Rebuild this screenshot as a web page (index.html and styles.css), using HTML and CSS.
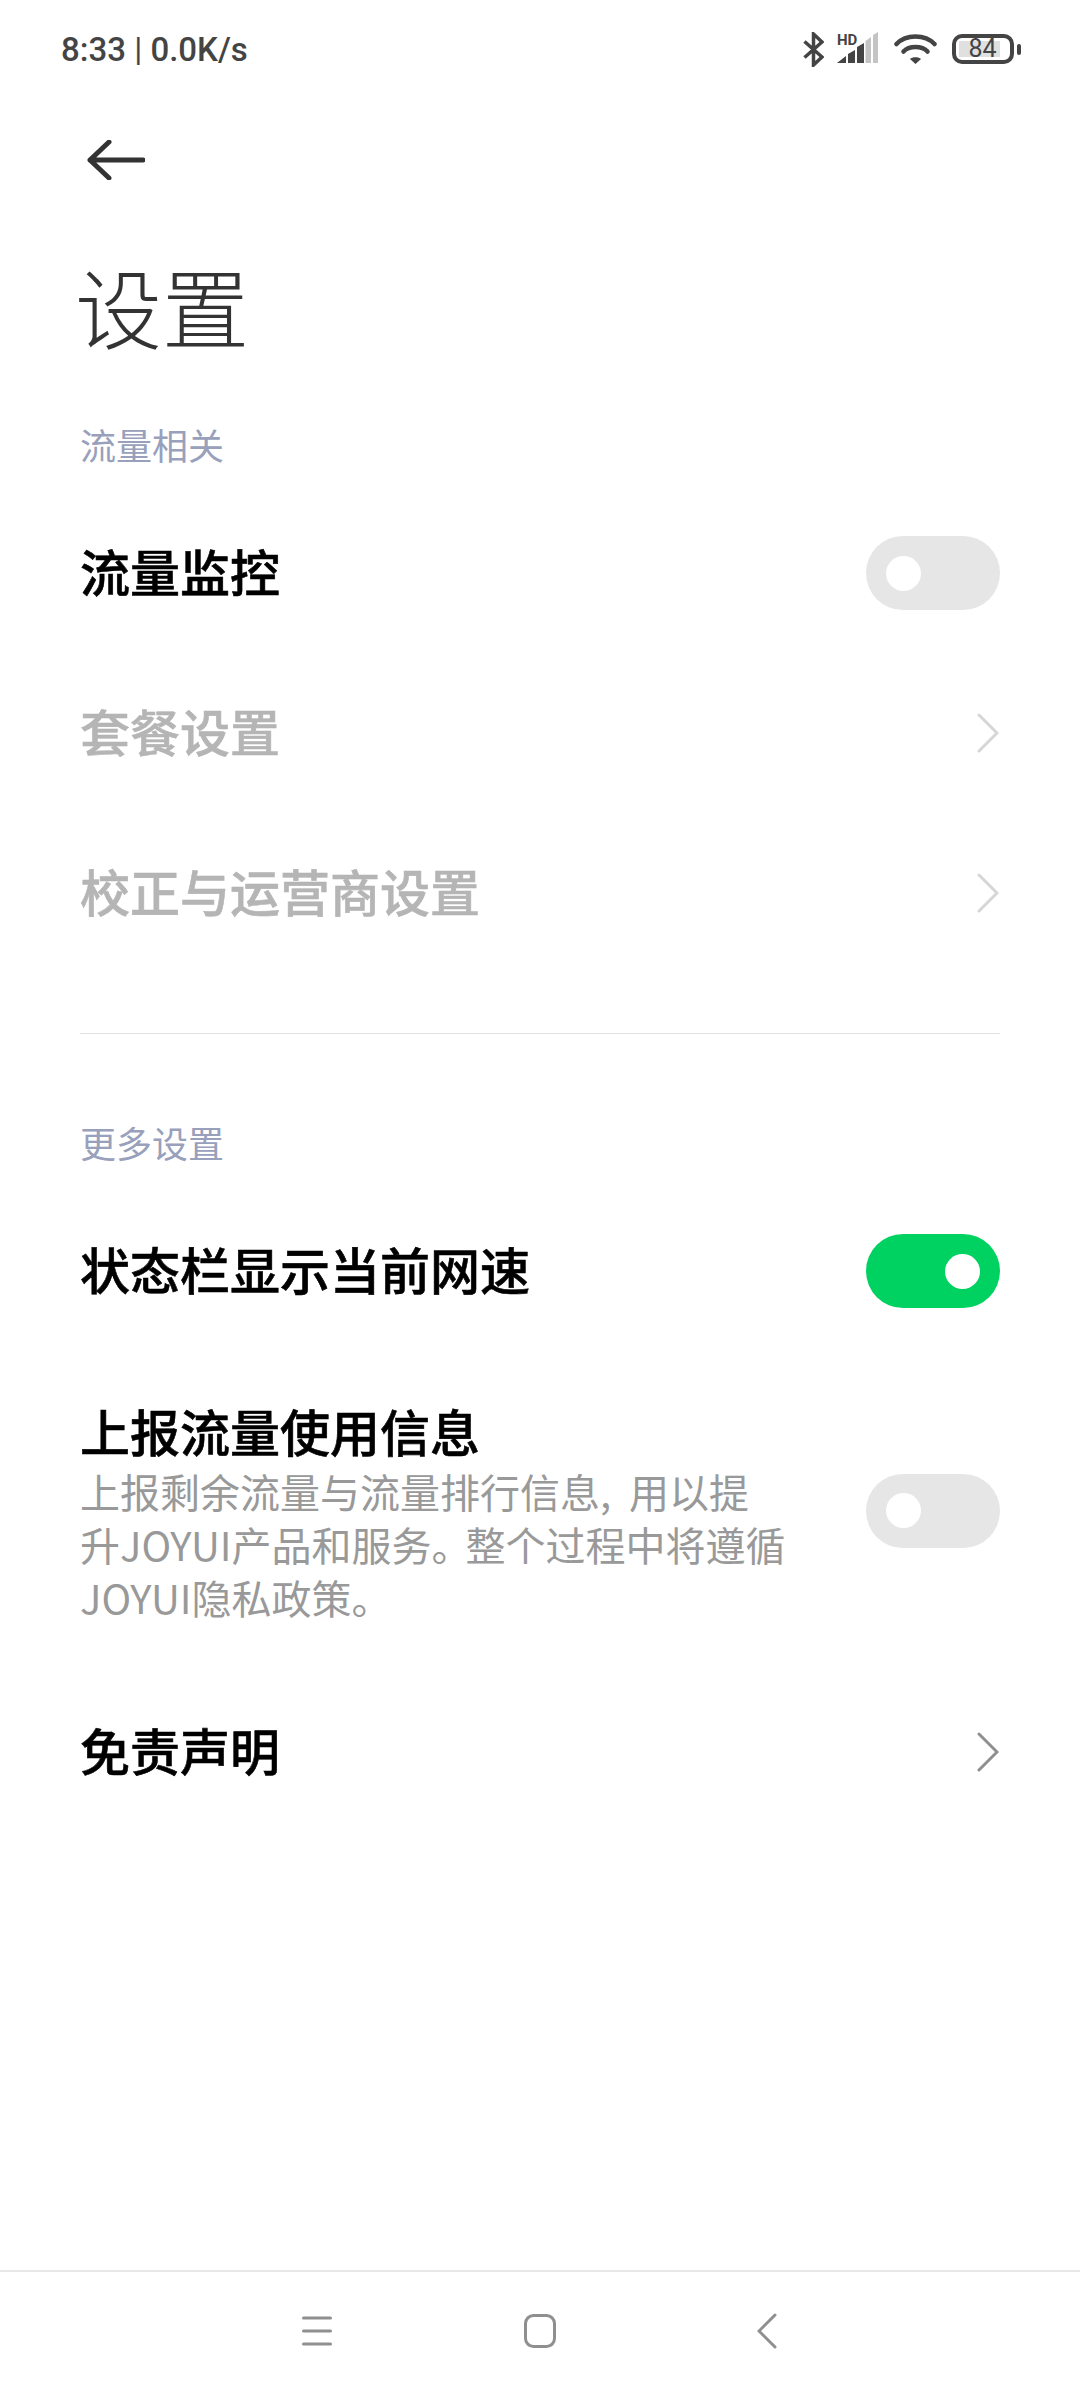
FILE: index.html
```html
<!DOCTYPE html>
<html lang="zh-CN">
<head>
  <meta charset="UTF-8">
  <meta name="viewport" content="width=device-width, initial-scale=1.0">
  <title>设置</title>
  <link rel="stylesheet" href="styles.css">
</head>
<body>
  <div class="page">
    <div class="status-bar">
      <div class="status-text">8:33 <span class="status-sep">|</span> 0.0K/s</div>
      <div class="status-icons">
        <svg class="ic-bt" width="21" height="35" viewBox="0 0 21 35"><path d="M1.500 9.500 L19 25 L10.500 33 V2 L19 10 L1.500 25.500" fill="none" stroke="#444" stroke-width="3.500"/></svg>
        <svg class="ic-signal" width="41" height="38" viewBox="0 0 41 38">
          <text x="0" y="14.700" class="hd-text">HD</text>
          <path d="M0 33 L9 26 V33Z" fill="#444"/>
          <path d="M11 24 L18 20 V33 H11Z" fill="#444"/>
          <path d="M20 17 L27 13 V33 H20Z" fill="#444"/>
          <path d="M28.500 11 L34 7 V33 H28.500Z" fill="#c4c4c4"/>
          <path d="M36 5 L41 2 V33 H36Z" fill="#c4c4c4"/>
        </svg>
        <svg class="ic-wifi" width="43" height="30" viewBox="0 0 43 30">
          <path d="M2.500 10 C12 0 31 0 40.500 10" fill="none" stroke="#444" stroke-width="4.500" stroke-linecap="round"/>
          <path d="M9.500 17.500 C15 11.500 28 11.500 33.500 17.500" fill="none" stroke="#444" stroke-width="4.500" stroke-linecap="round"/>
          <path d="M21.500 30 L16 25 C18 22.500 25 22.500 27 25Z" fill="#444"/>
        </svg>
        <div class="battery">
          <div class="battery-body"><span class="battery-level">84</span></div>
          <div class="battery-nub"></div>
        </div>
      </div>
    </div>

    <div class="header">
      <svg class="back-arrow" width="58" height="40" viewBox="0 0 58 40"><path d="M56 20 H3 M22 2 L3 20 L22 38" fill="none" stroke="#333" stroke-width="5" stroke-linecap="round" stroke-linejoin="round"/></svg>
      <h1 class="page-title">设置</h1>
    </div>

    <div class="group-label">流量相关</div>
    <div class="row">
      <div class="row-title">流量监控</div>
      <div class="switch"><div class="knob"></div></div>
    </div>
    <div class="row row-disabled">
      <div class="row-title">套餐设置</div>
      <svg class="chevron" width="22" height="40" viewBox="0 0 22 40"><path d="M2 2 L20 20 L2 38" fill="none" stroke="#d6d6d6" stroke-width="3" stroke-linecap="round"/></svg>
    </div>
    <div class="row row-disabled">
      <div class="row-title">校正与运营商设置</div>
      <svg class="chevron" width="22" height="40" viewBox="0 0 22 40"><path d="M2 2 L20 20 L2 38" fill="none" stroke="#d6d6d6" stroke-width="3" stroke-linecap="round"/></svg>
    </div>

    <div class="divider"></div>

    <div class="group-label">更多设置</div>
    <div class="row">
      <div class="row-title">状态栏显示当前网速</div>
      <div class="switch switch-on"><div class="knob"></div></div>
    </div>
    <div class="row row-tall">
      <div class="row-main">
        <div class="row-title">上报流量使用信息</div>
        <div class="row-desc">上报剩余流量与流量排行信息,&nbsp; 用以提<br>升JOYUI产品和服务<span class="tight-stop">。</span>整个过程中将遵循<br>JOYUI隐私政策。</div>
      </div>
      <div class="switch"><div class="knob"></div></div>
    </div>
    <div class="row">
      <div class="row-title">免责声明</div>
      <svg class="chevron" width="22" height="40" viewBox="0 0 22 40"><path d="M2 2 L20 20 L2 38" fill="none" stroke="#8f8f8f" stroke-width="3" stroke-linecap="round"/></svg>
    </div>

    <div class="nav-bar">
      <svg width="30" height="30" viewBox="0 0 30 30"><path d="M1.500 2 H28.500 M1.500 15 H28.500 M1.500 28 H28.500" stroke="#8f8f8f" stroke-width="3" stroke-linecap="round"/></svg>
      <svg width="34" height="34" viewBox="0 0 34 34"><rect x="2.500" y="1.500" width="29" height="31" rx="8" fill="none" stroke="#8f8f8f" stroke-width="3"/></svg>
      <svg class="nav-back" width="20" height="36" viewBox="0 0 20 36"><path d="M18 2 L2 18 L18 34" fill="none" stroke="#8f8f8f" stroke-width="3" stroke-linecap="round"/></svg>
    </div>
  </div>
</body>
</html>
```
FILE: styles.css
```css
body {
  margin: 0;
  padding: 0;
  background-color: #ffffff;
  font-family: "Noto Sans CJK SC", "Noto Sans", sans-serif;
}
.page {
  display: flex;
  flex-direction: column;
  height: 2400px;
}
.status-bar {
  display: flex;
  justify-content: space-between;
  align-items: center;
  height: 98px;
  padding: 0 59px 0 61px;
  flex-shrink: 0;
}
.status-text {
  font-family: Roboto, sans-serif;
  font-size: 33px;
  font-weight: 500;
  color: #444444;
}
.status-sep {
  font-weight: 400;
}
.status-icons {
  display: flex;
  align-items: center;
}
.ic-bt {
  margin-right: 13px;
}
.ic-signal {
  margin-right: 16px;
}
.ic-wifi {
  margin-right: 15px;
}
.hd-text {
  font-family: Roboto, sans-serif;
  font-size: 15px;
  font-weight: 700;
  fill: #444444;
}
.battery {
  display: flex;
  align-items: center;
}
.battery-body {
  display: flex;
  align-items: center;
  box-sizing: border-box;
  width: 62px;
  height: 30px;
  padding-left: 3px;
  border: 4px solid #444444;
  border-radius: 10px;
}
.battery-level {
  display: block;
  width: 41px;
  background-color: #e0e0e0;
  font-family: Roboto, sans-serif;
  font-size: 25px;
  line-height: 16px;
  text-indent: 6px;
  text-align: center;
  color: #444444;
}
.battery-nub {
  width: 4px;
  height: 11px;
  margin-left: 3px;
  border-radius: 2px;
  background-color: #444444;
}
.header {
  padding: 42px 0 0 87px;
  height: 322px;
  box-sizing: border-box;
  flex-shrink: 0;
}
.back-arrow {
  display: block;
}
.page-title {
  margin: 75px 0 0 -12px;
  font-size: 87px;
  font-weight: 300;
  line-height: 100px;
  color: #333333;
}
.group-label {
  height: 48px;
  padding-left: 80px;
  margin-bottom: 25px;
  font-size: 36px;
  line-height: 48px;
  color: #98a0bb;
  flex-shrink: 0;
}
.row {
  display: flex;
  justify-content: space-between;
  align-items: center;
  box-sizing: border-box;
  min-height: 160px;
  padding: 0 80px 0 80px;
  flex-shrink: 0;
}
.row > .row-title {
  padding-bottom: 6px;
}
.row-tall {
  padding-top: 49px;
  padding-bottom: 48px;
}
.row-tall .switch {
  margin-bottom: 3px;
}
.row-main {
  width: 720px;
}
.row-title {
  font-size: 50px;
  font-weight: 500;
  line-height: 60px;
  color: #000000;
  -webkit-text-stroke: 0.6px currentColor;
}
.row-disabled .row-title {
  color: #b5b5b5;
}
.row-desc {
  margin-top: 5px;
  font-size: 40px;
  line-height: 53px;
  color: #999999;
}
.tight-stop {
  letter-spacing: -6px;
}
.switch {
  display: flex;
  align-items: center;
  box-sizing: border-box;
  width: 134px;
  height: 74px;
  padding-left: 20px;
  border-radius: 37px;
  background-color: #e6e6e6;
}
.switch-on {
  justify-content: flex-end;
  padding-left: 0;
  padding-right: 20px;
  background-color: #00d262;
}
.knob {
  width: 35px;
  height: 35px;
  border-radius: 50%;
  background-color: #ffffff;
}
.chevron {
  margin-right: 1px;
}
.divider {
  height: 1px;
  margin: 60px 80px 84px 80px;
  background-color: #e2e2e2;
  flex-shrink: 0;
}
.nav-bar {
  display: flex;
  align-items: center;
  gap: 191px;
  box-sizing: border-box;
  height: 130px;
  margin-top: auto;
  padding: 0 0 11px 302px;
  border-top: 2px solid #e8e8e8;
  flex-shrink: 0;
}
.nav-back {
  margin-left: 9px;
}
```
